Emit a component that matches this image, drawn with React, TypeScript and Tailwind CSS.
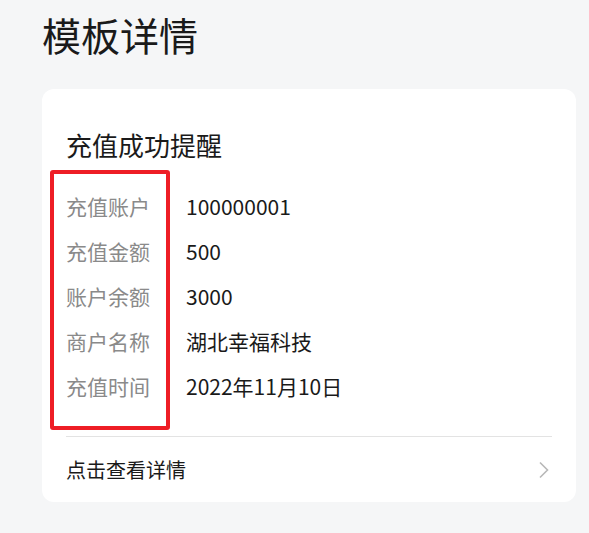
const rows = [
  { label: '充值账户', value: '100000001' },
  { label: '充值金额', value: '500' },
  { label: '账户余额', value: '3000' },
  { label: '商户名称', value: '湖北幸福科技' },
  { label: '充值时间', value: '2022年11月10日' },
]

export default function App() {
  return (
    <div
      className="min-h-[533px] w-[589px] bg-[#f5f6f7] pl-[42px] pr-[13px] pt-[10px]"
      style={{ fontFamily: '"Noto Sans CJK SC", "Noto Sans", sans-serif' }}
    >
      {/* Page title */}
      <h1 className="text-[39px] leading-[48px] text-[#1a1a1a]">模板详情</h1>

      {/* Card */}
      <div className="relative mt-[31px] rounded-[12px] bg-white px-[24px] pt-[38px]">
        <div className="text-[26px] leading-[36px] text-[#1a1a1a]">充值成功提醒</div>

        <div className="mt-[21px] mb-[27px]">
          {rows.map((r) => (
            <div key={r.label} className="flex h-[45px] items-center text-[21px]">
              <span className="w-[120px] text-[#8a8a8a]">{r.label}</span>
              <span className="text-[#1a1a1a]">{r.value}</span>
            </div>
          ))}
        </div>

        {/* Footer link */}
        <div className="flex h-[66px] items-center justify-between border-t border-[#e3e3e3]">
          <span className="text-[20px] text-[#1a1a1a]">点击查看详情</span>
          <svg width="12" height="18" viewBox="0 0 12 18" className="mr-[2px]">
            <path d="M2 1.5 L9.5 9 L2 16.5" fill="none" stroke="#b8b8b8" strokeWidth="1.6" />
          </svg>
        </div>

        {/* Annotation highlight */}
        <div className="absolute left-[8px] top-[81px] h-[260px] w-[120px] rounded-[3px] border-[4px] border-[#ee1d25]" />
      </div>
    </div>
  )
}
